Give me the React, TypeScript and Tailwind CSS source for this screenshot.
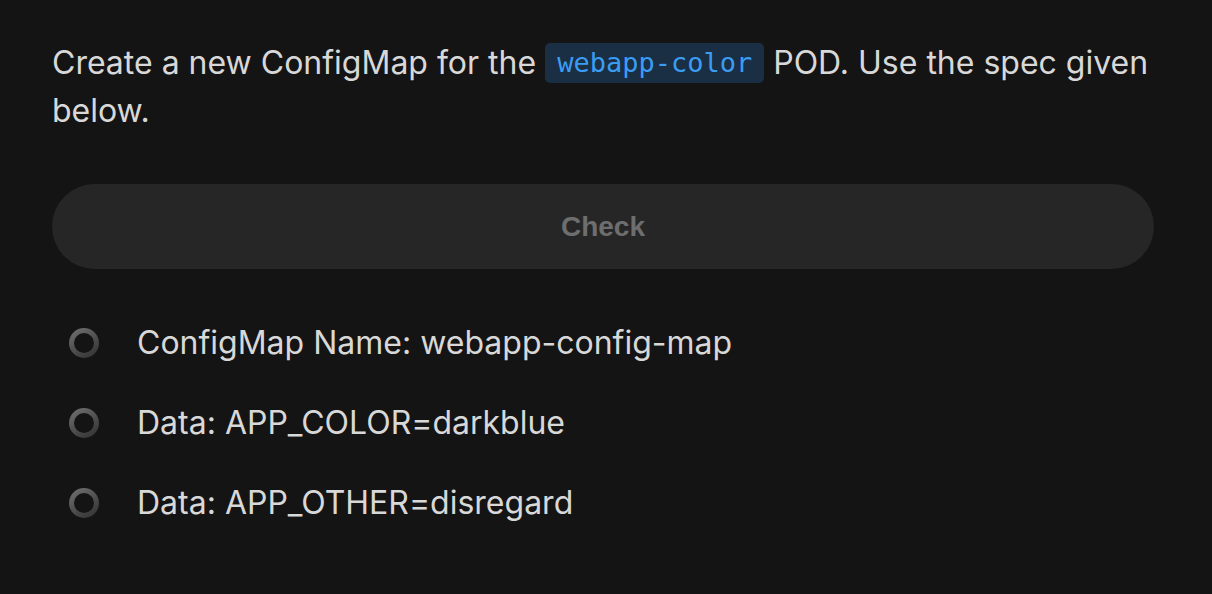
import React from "react";

function Ring() {
  return (
    <svg width="32" height="32" viewBox="0 0 32 32" className="shrink-0">
      <defs>
        <linearGradient id="rg" x1="0" y1="0" x2="0.6" y2="1">
          <stop offset="0%" stopColor="#6e6e6e" />
          <stop offset="100%" stopColor="#3c3c3c" />
        </linearGradient>
      </defs>
      <circle cx="16" cy="16" r="12.5" fill="none" stroke="url(#rg)" strokeWidth="5" />
    </svg>
  );
}

export default function App() {
  const items = [
    "ConfigMap Name: webapp-config-map",
    "Data: APP_COLOR=darkblue",
    "Data: APP_OTHER=disregard",
  ];
  return (
    <div className="w-[1212px] h-[594px] bg-[#141414] overflow-hidden" style={{ fontFamily: "Inter, 'Noto Sans', sans-serif" }}>
      <div className="pl-[52px] pt-[39px] w-[1156px]">
        <p className="text-[32px] leading-[48px] text-[#d8d8d8]">
          Create a new ConfigMap for the{" "}
          <code className="inline-block bg-[#1a2e44] text-[#3a9df3] rounded-[5px] px-[12px] leading-[40px] text-[27px] align-[2px]" style={{ fontFamily: "'DejaVu Sans Mono', monospace" }}>
            webapp-color
          </code>{" "}
          POD. Use the spec given below.
        </p>
        <button className="mt-[49px] w-[1102px] h-[85px] rounded-full bg-[#262626] text-[#6e6e6e] text-[28px] font-bold flex items-center justify-center" style={{ fontFamily: "'Liberation Sans', Arial, sans-serif" }}>
          Check
        </button>
        <ul className="mt-[58px] flex flex-col gap-[48px]">
          {items.map((t) => (
            <li key={t} className="flex items-center h-[32px] pl-[16px]">
              <Ring />
              <span className="ml-[37px] text-[32px] text-[#d8d8d8] leading-[32px]">{t}</span>
            </li>
          ))}
        </ul>
      </div>
    </div>
  );
}
